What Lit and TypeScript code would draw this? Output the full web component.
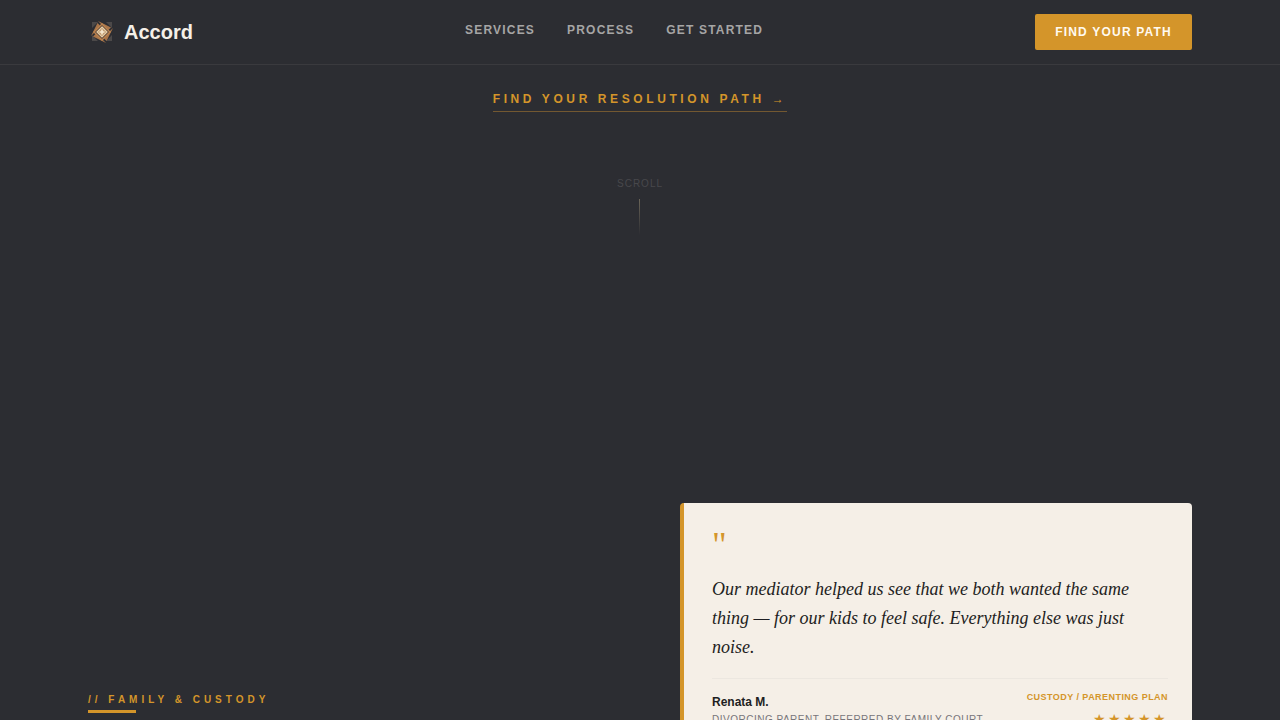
import { LitElement, html, css } from "lit";
import { customElement } from "lit/decorators.js";

@customElement("app-root")
export class AppRoot extends LitElement {
  static styles = css`
    :host {
      display: block;
      height: 100vh;
      overflow-y: auto;
      scrollbar-width: none;
      background: #2c2d32;
      color: #f5f0e8;
      font-family: "Liberation Sans", Arial, sans-serif;
    }
    a {
      color: inherit;
      text-decoration: none;
    }
    .wrap {
      box-sizing: border-box;
      max-width: 1200px;
      margin: 0 auto;
      padding: 0 48px;
    }
    .header {
      position: sticky;
      top: 0;
      z-index: 1;
      background: #2c2d32;
      border-bottom: 1px solid #3a3a3e;
    }
    .bar {
      display: flex;
      align-items: center;
      justify-content: space-between;
      height: 64px;
    }
    .brand {
      display: flex;
      align-items: center;
      gap: 8px;
      font-size: 20px;
      line-height: 24px;
      font-weight: 700;
    }
    .logo {
      display: block;
      width: 28px;
      height: 28px;
    }
    .links {
      display: flex;
      gap: 32px;
      padding-bottom: 4px;
      font-size: 12px;
      line-height: 16px;
      font-weight: 700;
      letter-spacing: 0.1em;
      color: #a6a5a5;
    }
    .action {
      height: 36px;
      padding: 0 20px;
      border: 0;
      border-radius: 2px;
      background: #d4952a;
      color: #fffaf0;
      font: 700 12px/16px "Liberation Sans", Arial, sans-serif;
      letter-spacing: 0.1em;
      cursor: pointer;
    }
    .hero {
      display: flex;
      flex-direction: column;
      align-items: center;
      padding-top: 24px;
    }
    .path {
      padding: 2px 0 4px;
      border-bottom: 1px solid #735831;
      font-size: 12px;
      line-height: 16px;
      font-weight: 700;
      letter-spacing: 0.3em;
      color: #d4952a;
    }
    .scroll {
      display: flex;
      flex-direction: column;
      align-items: center;
      gap: 7px;
      margin-top: 64px;
      font-size: 10px;
      line-height: 16px;
      letter-spacing: 0.1em;
      color: #48484c;
    }
    .line {
      width: 1px;
      height: 36px;
      background: linear-gradient(#6b6558, #2c2d32);
    }
    .service {
      display: grid;
      grid-template-columns: 1fr 1fr;
      gap: 80px;
      margin-top: 268px;
      padding-bottom: 96px;
    }
    .topic {
      padding-top: 189px;
    }
    .label {
      margin: 0;
      font-size: 10px;
      line-height: 16px;
      font-weight: 700;
      letter-spacing: 0.4em;
      color: #d4952a;
    }
    .rule {
      width: 48px;
      height: 3px;
      margin-top: 2px;
      background: #d4952a;
    }
    .card {
      margin: 0;
      padding: 24px 24px 32px 28px;
      border-left: 4px solid #d4952a;
      border-radius: 4px;
      background: #f5efe7;
      color: #1e1e22;
    }
    .mark {
      height: 48px;
      font: 36px/36px "Liberation Serif", "Times New Roman", serif;
      color: #d4952a;
    }
    .quote {
      margin: 0;
      font: italic 18px/29px "Liberation Serif", "Times New Roman", serif;
    }
    .credit {
      display: flex;
      justify-content: space-between;
      margin-top: 16px;
      padding-top: 11px;
      border-top: 1px solid #ece7e0;
    }
    .name {
      margin-top: 3px;
      font-size: 12px;
      line-height: 18px;
      font-weight: 700;
    }
    .role {
      font-size: 10px;
      line-height: 18px;
      letter-spacing: 0.05em;
      color: #77757a;
    }
    .meta {
      text-align: right;
      color: #d4952a;
    }
    .kind {
      font-size: 9px;
      line-height: 14px;
      font-weight: 700;
      letter-spacing: 0.05em;
    }
    .stars {
      margin-top: 6px;
      font-size: 14px;
      line-height: 18px;
      letter-spacing: 2px;
    }
  `;

  render() {
    return html`
      <header class="header">
        <div class="wrap bar">
          <a class="brand" href="#top">
            <svg class="logo" viewBox="0 0 28 28" aria-hidden="true">
              <path d="M4 4h6L4 10zM24 4v6l-6-6zM4 23v-6l6 6zM24 23h-6l6-6z" fill="#4c4949" />
              <g fill="#a97549">
                <path d="M10 3l13 6.500-2.500 2.500L14 7z" />
                <path d="M25 10l-6.500 13-2.500-2.500L21 14z" />
                <path d="M18 25L5 18.500 7.500 16 14 21z" />
                <path d="M3 18L9.500 5 12 7.500 7 14z" />
              </g>
              <path d="M14 6l8 8-8 8-8-8z" fill="#5e4638" stroke="#b9824f" stroke-width="1.4" />
              <path d="M14 9l5 5-5 5-5-5z" fill="#c19a70" stroke="#e6cfa9" stroke-width="1.2" />
              <path d="M14 11.500v5M11.500 14h5" stroke="#f8ecd2" stroke-width="1.6" />
            </svg>
            <span>Accord</span>
          </a>
          <nav class="links">
            <a href="#services">SERVICES</a>
            <a href="#process">PROCESS</a>
            <a href="#start">GET STARTED</a>
          </nav>
          <button class="action" type="button">FIND YOUR PATH</button>
        </div>
      </header>
      <main>
        <section class="hero">
          <a class="path" href="#start">FIND YOUR RESOLUTION PATH →</a>
          <div class="scroll"><span>SCROLL</span><span class="line"></span></div>
        </section>
        <section class="wrap service" id="services">
          <div class="topic">
            <h2 class="label">// FAMILY &amp; CUSTODY</h2>
            <div class="rule"></div>
          </div>
          <figure class="card">
            <div class="mark" aria-hidden="true">"</div>
            <blockquote class="quote">
              Our mediator helped us see that we both wanted the same thing — for our kids to feel safe. Everything else was just noise.
            </blockquote>
            <figcaption class="credit">
              <div>
                <div class="name">Renata M.</div>
                <div class="role">DIVORCING PARENT, REFERRED BY FAMILY COURT</div>
              </div>
              <div class="meta">
                <div class="kind">CUSTODY / PARENTING PLAN</div>
                <div class="stars">★★★★★</div>
              </div>
            </figcaption>
          </figure>
        </section>
      </main>
    `;
  }
}
